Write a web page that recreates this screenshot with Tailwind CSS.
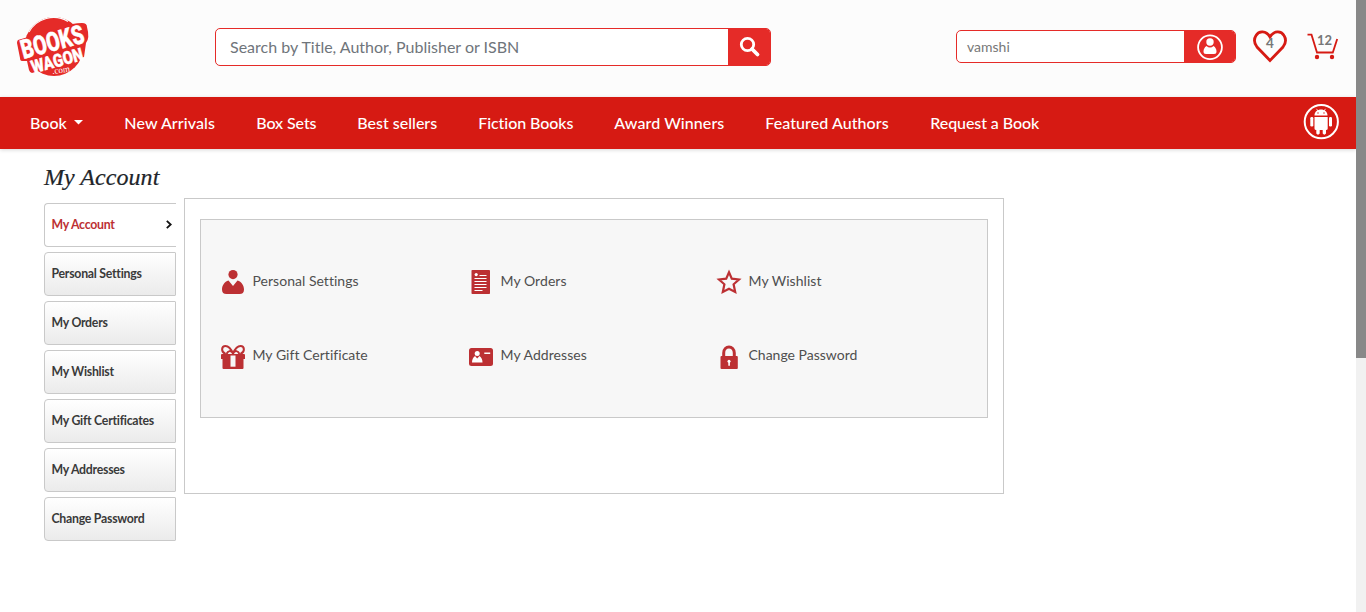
<!DOCTYPE html>
<html lang="en">
<head>
<meta charset="utf-8">
<title>My Account</title>
<script src="https://cdn.jsdelivr.net/npm/@tailwindcss/browser@4"></script>
</head>
<body class="flex h-[612px] w-[1366px] overflow-hidden bg-white font-['Lato',sans-serif]">
<div class="flex w-[1356px] flex-col">
  <header class="flex h-[97px] shrink-0 items-start bg-[#fcfcfc]">
    <svg class="ml-3 mt-3 h-[70px] w-[80px] shrink-0 overflow-visible" viewBox="12 12 80 70">
      <circle cx="54" cy="46.500" r="29.500" fill="#e52b28"/>
      <path d="M29 32A28 28 0 0 1 68 21.500" fill="none" stroke="#fcfcfc" stroke-width="1.100"/>
      <path d="M18 40L28 37Q34 32 52 30L64 27Q72 23 82 23Q87 23 87 27Q90 38 86 43L84 57L32 73Q30 73 29 70L27 61L22 61Q20 61 20 58L17 43Q17 41 18 40Z" fill="#e52b28"/>
      <g font-family="Roboto, 'Liberation Sans', sans-serif" font-weight="900" fill="#fff" stroke="#fff" stroke-width=".4">
        <text transform="translate(23.500 59) rotate(-15) scale(.75 1)" font-size="26.500" textLength="86" lengthAdjust="spacingAndGlyphs">BOOKS</text>
        <text transform="translate(33 73.500) rotate(-15) scale(.9 1)" font-size="18" textLength="59" lengthAdjust="spacingAndGlyphs">WAGON</text>
      </g>
      <text transform="translate(52.500 74) rotate(-8)" font-family="Liberation Serif, serif" font-size="9" fill="#fff">.com</text>
    </svg>
    <div class="ml-[123px] mt-7 flex h-[38px] w-[556px] overflow-hidden rounded-[5px] border border-[#e52b28] bg-white">
      <div class="flex grow items-center pl-[14px] text-[16px] text-[#6f757b]">Search by Title, Author, Publisher or ISBN</div>
      <div class="w-[42px] shrink-0 bg-[#e52b28]">
        <svg class="h-9 w-[42px]" viewBox="0 0 42 36" fill="none" stroke="#fff"><circle cx="19.500" cy="15.500" r="6.200" stroke-width="2.800"/><path d="M24 20L29.500 25.500" stroke-width="3.800" stroke-linecap="round"/></svg>
      </div>
    </div>
    <div class="ml-[185px] mt-[30px] flex h-[33px] w-[280px] overflow-hidden rounded-[5px] border border-[#e52b28] bg-white">
      <div class="flex grow items-center pl-[10px] text-[14px] text-[#777]">vamshi</div>
      <svg class="h-[31px] w-[51px] shrink-0 bg-[#e52b28]" viewBox="0 0 51 31"><circle cx="26" cy="16.200" r="11.900" fill="none" stroke="#fff" stroke-width="1.800"/><circle cx="26" cy="11" r="3.700" fill="#fff"/><path d="M22.500 15Q26 18 29.500 15Q32.500 17 32.500 20.500Q32.500 23 30 23H22Q19.500 23 19.500 20.500Q19.500 17 22.500 15Z" fill="#fff"/></svg>
    </div>
    <svg class="ml-[17px] mt-[29px] h-[34px] w-[34px] shrink-0" viewBox="1253 29 34 34">
      <path d="M1270 60.500L1257 47Q1252.500 41 1256 35.500C1259 30.500 1266 30.500 1270 37C1274 30.500 1281 30.500 1284 35.500Q1287.500 41 1283 47Z" fill="none" stroke="#d61a13" stroke-width="2.800"/>
      <text x="1266" y="48" font-size="13.500" font-weight="700" fill="#777">4</text>
    </svg>
    <svg class="ml-[20px] mt-[30px] h-[32px] w-[32px] shrink-0" viewBox="1307 30 32 32">
      <path d="M1307.500 34.700H1311.500L1317 52.500H1332.800L1337.200 39" fill="none" stroke="#d61a13" stroke-width="1.800"/>
      <circle cx="1317" cy="57" r="2.200" fill="#d61a13"/><circle cx="1332" cy="57" r="2.200" fill="#d61a13"/>
      <text x="1317" y="45.300" font-size="13" font-weight="700" fill="#777" textLength="15">12</text>
    </svg>
  </header>
  <nav class="flex h-[52px] shrink-0 items-center bg-[#d61a13] pl-[30px] text-[16px] font-medium text-white shadow-[0_1px_4px_rgba(0,0,0,0.16)]">
    <div class="flex w-[94.300px] items-center">Book<svg class="-mt-[2px] ml-[7px] h-[5px] w-[9px]" viewBox="0 0 9 5"><path d="M0 0H9L4.500 4.500Z" fill="#fff"/></svg></div>
    <div class="w-[132px] tracking-[0.100px]">New Arrivals</div>
    <div class="w-[101px] tracking-[-0.100px]">Box Sets</div>
    <div class="w-[121px]">Best sellers</div>
    <div class="w-[136px] tracking-[-0.080px]">Fiction Books</div>
    <div class="w-[151px] tracking-[0.080px]">Award Winners</div>
    <div class="w-[165px] tracking-[0.070px]">Featured Authors</div>
    <div class="grow tracking-[-0.080px]">Request a Book</div>
    <svg class="-mt-[2px] mr-[17px] h-9 w-9" viewBox="1303 104 36 36">
      <circle cx="1321.300" cy="121.700" r="16.600" fill="none" stroke="#fff" stroke-width="2"/>
      <path d="M1314.500 115.500C1314.500 107.500 1327.500 107.500 1327.500 115.500ZM1314.500 117H1327.700V128.500Q1327.700 130 1326 130V133.500Q1324.300 135.800 1322.700 133.500V130H1319.700V133.500Q1318 135.800 1316.300 133.500V130Q1314.500 130 1314.500 128.500Z" fill="#fff"/>
      <rect x="1310.300" y="117" width="3" height="9.500" rx="1.200" fill="#fff"/><rect x="1329" y="117" width="3" height="9.500" rx="1.200" fill="#fff"/>
      <path d="M1318 111L1316.500 108.800M1324 111L1325.500 108.800" stroke="#fff" stroke-width=".8"/>
      <circle cx="1318" cy="113" r=".7" fill="#d61a13"/><circle cx="1324" cy="113" r=".7" fill="#d61a13"/>
    </svg>
  </nav>
  <main class="pl-11">
    <h1 class="mt-3 h-[37px] font-['Liberation_Serif',serif] text-[24px] italic leading-[33px] tracking-[0.050px] text-[#212529] [-webkit-text-stroke:0.200px_#212529]">My Account</h1>
    <div class="flex">
      <aside class="mt-[5px] flex w-[132px] flex-col gap-[5px] text-[12.300px] font-bold leading-[41px] tracking-[-0.260px] text-[#3a3a3a]">
        <div class="flex h-11 items-start justify-between rounded-l-[4px] border border-r-0 border-[#c9c9c9] pl-[6.500px] pr-[4px] text-[#bc3033]">My Account<svg class="mt-[16px] h-[9px] w-[6px]" viewBox="0 0 6 9" fill="none" stroke="#111" stroke-width="1.800"><path d="M.8 .8L4.700 4.500L.8 8.200"/></svg></div>
        <div class="h-11 rounded-l-[4px] rounded-r-[1px] border border-[#c9c9c9] bg-linear-to-b from-white to-[#ebebeb] pl-[6.500px]">Personal Settings</div>
        <div class="h-11 rounded-l-[4px] rounded-r-[1px] border border-[#c9c9c9] bg-linear-to-b from-white to-[#ebebeb] pl-[6.500px]">My Orders</div>
        <div class="h-11 rounded-l-[4px] rounded-r-[1px] border border-[#c9c9c9] bg-linear-to-b from-white to-[#ebebeb] pl-[6.500px]">My Wishlist</div>
        <div class="h-11 rounded-l-[4px] rounded-r-[1px] border border-[#c9c9c9] bg-linear-to-b from-white to-[#ebebeb] pl-[6.500px]">My Gift Certificates</div>
        <div class="h-11 rounded-l-[4px] rounded-r-[1px] border border-[#c9c9c9] bg-linear-to-b from-white to-[#ebebeb] pl-[6.500px]">My Addresses</div>
        <div class="h-11 rounded-l-[4px] rounded-r-[1px] border border-[#c9c9c9] bg-linear-to-b from-white to-[#ebebeb] pl-[6.500px]">Change Password</div>
      </aside>
      <section class="ml-2 h-[296px] w-[820px] border border-[#c9c9c9] px-[15px] pt-[20px]">
        <div class="grid h-[199px] grid-cols-[248px_248px_1fr] grid-rows-[74px_74px] border border-[#c9c9c9] bg-[#f7f7f7] pl-[20px] pt-[24px] text-[14px] text-[#4f4f4f]">
          <div class="flex items-center gap-[7.500px]">
            <svg class="mt-[2px] h-6 w-6" viewBox="0 0 24 24" fill="#bc3033"><circle cx="12" cy="4.600" r="4.600"/><path d="M7.500 10.500L12 16L16.500 10.500C20.500 11.500 23 15.500 23 19.500Q23 24 18.500 24H5.500Q1 24 1 19.500C1 15.500 3.500 11.500 7.500 10.500Z"/></svg>
            <span class="-mt-[2px] tracking-[0.030px]">Personal Settings</span></div>
          <div class="flex items-center gap-[7.500px]">
            <svg class="mt-[2px] h-6 w-6" viewBox="0 0 24 24"><rect x="2.500" width="18.500" height="24" rx=".8" fill="#bc3033"/><circle cx="7.200" cy="4.600" r="1.600" fill="#fff"/><path d="M10.500 5.500H17.500M5.500 8.500H17.500M5.500 11.500H17.500M5.500 14.500H17.500M5.500 17.500H17.500M5.500 20.500H13.500" stroke="#fff" stroke-width="1.200"/></svg>
            <span class="-mt-[2px] tracking-[0.060px]">My Orders</span></div>
          <div class="flex items-center gap-[7.500px]">
            <svg class="mt-[2px] h-6 w-6 overflow-visible" viewBox="0 0 24 24" fill="none" stroke="#bc3033" stroke-width="2.200"><path d="M12 2.200L14.800 8.700L22 9.500L16.600 14.300L18.200 22L12 18.800L5.800 22L7.400 14.300L2 9.500L9.200 8.700Z"/></svg>
            <span class="-mt-[2px] tracking-[0.040px]">My Wishlist</span></div>
          <div class="flex items-center gap-[7.500px]">
            <svg class="mt-[4px] h-6 w-6 overflow-visible" viewBox="0 0 24 24"><path d="M4.500 9C-.5 6.500 .5 1 4.500 1C8 1 10.500 5 12 8.500C13.500 5 16 1 19.500 1C23.500 1 24.500 6.500 19.500 9M5.500 9C7 5.500 10 5 12 8.500C14 5 17 5.500 18.500 9" fill="none" stroke="#bc3033" stroke-width="2"/><path d="M0 10Q0 9 1 9H23Q24 9 24 10V14H22.500V23Q22.500 24 21.500 24H2.500Q1.500 24 1.500 23V14H0Z" fill="#bc3033"/><path d="M9.500 10.500H14.500V21.700H9.500Z" fill="#f7f7f7"/></svg>
            <span class="-mt-[2px] tracking-[0.030px]">My Gift Certificate</span></div>
          <div class="flex items-center gap-[7.500px]">
            <svg class="mt-[4px] h-6 w-6" viewBox="0 0 24 24"><rect y="3" width="24" height="18" rx="2.500" fill="#bc3033"/><circle cx="8.200" cy="8.500" r="2.500" fill="#fff"/><path d="M6 11L8.200 13.500L10.500 11Q13.500 13 13.500 17.500H3Q3 13 6 11ZM15.300 7.500H21.200V9H15.300Z" fill="#fff"/></svg>
            <span class="-mt-[2px] tracking-[0.060px]">My Addresses</span></div>
          <div class="flex items-center gap-[7.500px]">
            <svg class="mt-[4px] h-6 w-6" viewBox="0 0 24 24"><path d="M6.700 13V8C6.700 0 17.300 0 17.300 8V13" fill="none" stroke="#bc3033" stroke-width="3"/><rect x="3.500" y="11" width="17.300" height="13" rx="1" fill="#bc3033"/><circle cx="12" cy="16.300" r="1.500" fill="#fff"/><path d="M11.300 17H12.900V20.800H11.300Z" fill="#fff"/></svg>
            <span class="-mt-[2px]">Change Password</span></div>
        </div>
      </section>
    </div>
  </main>
</div>
<div class="h-[612px] w-[10px] bg-[#f1f1f1]"><div class="h-[358px] bg-[#888]"></div></div>
</body>
</html>
